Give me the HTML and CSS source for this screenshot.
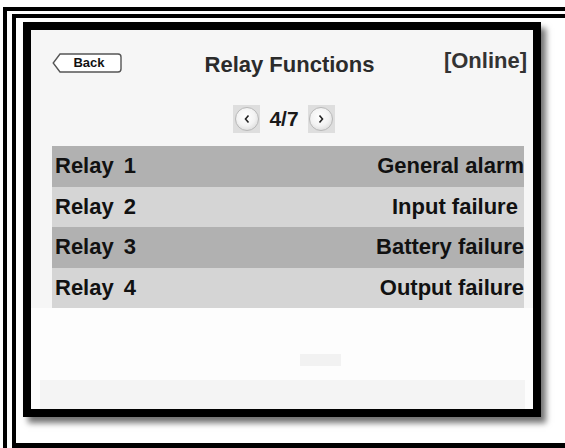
FILE: index.html
```html
<!DOCTYPE html>
<html lang="en">
<head>
    <meta charset="UTF-8">
    <meta name="viewport" content="width=device-width, initial-scale=1.0">
    <title>Relay Functions</title>
    <link rel="stylesheet" href="styles.css">
</head>
<body>
    <div class="outerlines">
        <div class="innerlines">
            <div class="device">
                <div class="screen">
                    <div class="header">
                        <button class="backbtn">
                            <svg class="backshape" width="70" height="20" viewBox="0 0 70 20">
                                <path d="M8 1 H66 Q69 1 69 4 V16 Q69 19 66 19 H8 L1.2 10 Z" fill="#fff" stroke="#555" stroke-width="1.4"/>
                            </svg>
                            <span class="backtext">Back</span>
                        </button>
                        <h1 class="title">Relay Functions</h1>
                        <div class="status">[Online]</div>
                    </div>

                    <div class="pager">
                        <div class="pagebtn">
                            <span class="circle">
                                <svg width="8" height="10" viewBox="0 0 8 10"><polyline points="5.5,1.5 2.5,5 5.5,8.5" fill="none" stroke="#222" stroke-width="1.6"/></svg>
                            </span>
                        </div>
                        <span class="pagenum">4/7</span>
                        <div class="pagebtn">
                            <span class="circle">
                                <svg width="8" height="10" viewBox="0 0 8 10"><polyline points="2.5,1.5 5.5,5 2.5,8.5" fill="none" stroke="#222" stroke-width="1.6"/></svg>
                            </span>
                        </div>
                    </div>

                    <div class="relays">
                        <div class="relay dark"><span class="name">Relay 1</span><span>General alarm</span></div>
                        <div class="relay light"><span class="name">Relay 2</span><span>Input failure&nbsp;</span></div>
                        <div class="relay dark"><span class="name">Relay 3</span><span>Battery failure</span></div>
                        <div class="relay light"><span class="name">Relay 4</span><span>Output failure</span></div>
                    </div>

                    <div class="lower">
                        <div class="blank">
                            <div class="smallbox"></div>
                        </div>
                        <div class="band"></div>
                    </div>
                </div>
            </div>
        </div>
    </div>
</body>
</html>
```

FILE: styles.css
```css
body {
    margin: 0;
    background: #fff;
    font-family: "Liberation Sans", Arial, sans-serif;
    overflow: hidden;
}
.outerlines {
    margin: 7px 0 0 3px;
    border-left: 4px solid #000;
    border-top: 4px solid #000;
    padding: 3px 0 0 5px;
}
.innerlines {
    border-left: 4px solid #000;
    border-top: 4px solid #000;
    border-bottom: 5px solid #000;
    padding: 4px 0 0 7px;
    box-sizing: border-box;
    height: 434px;
}
.device {
    width: 518px;
    height: 395px;
    box-sizing: border-box;
    border: 8px solid #000;
    box-shadow: 5px 6px 6px rgba(0, 0, 0, 0.55);
    background: #f6f6f6;
}
.screen {
    display: flex;
    flex-direction: column;
    height: 100%;
}
.header {
    display: grid;
    grid-template-columns: 1fr auto 1fr;
    align-items: start;
    margin-top: 22px;
    padding: 0 6px 0 21px;
}
.backbtn {
    position: relative;
    width: 70px;
    height: 20px;
    margin-top: 1px;
    padding: 0;
    border: none;
    background: none;
    justify-self: start;
}
.backshape {
    position: absolute;
    left: 0;
    top: 0;
}
.backtext {
    position: relative;
    display: block;
    font-family: "Liberation Sans", Arial, sans-serif;
    font-weight: bold;
    font-size: 13px;
    line-height: 20px;
    color: #111;
    padding-left: 4px;
}
.title {
    margin: 0;
    font-size: 22px;
    line-height: 26px;
    font-weight: bold;
    color: #2b2b2b;
}
.status {
    justify-self: end;
    margin-top: -3px;
    font-weight: bold;
    font-size: 22px;
    line-height: 24px;
    color: #333;
}
.pager {
    display: flex;
    justify-content: center;
    align-items: center;
    gap: 9px;
    margin-top: 27px;
    padding-left: 4px;
}
.pagebtn {
    width: 27px;
    height: 28px;
    background: #dedede;
    display: flex;
    align-items: center;
    justify-content: center;
}
.circle {
    width: 22px;
    height: 22px;
    border-radius: 50%;
    border: 1px solid #b8b8b8;
    background: radial-gradient(circle at 45% 40%, #fff 0%, #f3f3f3 50%, #cdcdcd 100%);
    display: flex;
    align-items: center;
    justify-content: center;
}
.pagenum {
    font-size: 21px;
    font-weight: bold;
    color: #1a1a1a;
    line-height: 28px;
}
.relays {
    margin: 13px 9px 0 21px;
}
.relay {
    display: flex;
    justify-content: space-between;
    align-items: center;
    height: 40.5px;
    padding-left: 3px;
    font-size: 22px;
    font-weight: bold;
    color: #111;
}
.name {
    word-spacing: 4px;
}
.dark {
    background: #b1b1b1;
}
.light {
    background: #d5d5d5;
}
.lower {
    flex: 1;
    display: flex;
    flex-direction: column;
    background: #fdfdfd;
}
.blank {
    height: 72px;
}
.smallbox {
    width: 41px;
    height: 12px;
    margin: 46px 0 0 269px;
    background: #f2f2f2;
}
.band {
    flex: 1;
    margin: 0 8px 0 9px;
    background: #f4f4f4;
}
```
